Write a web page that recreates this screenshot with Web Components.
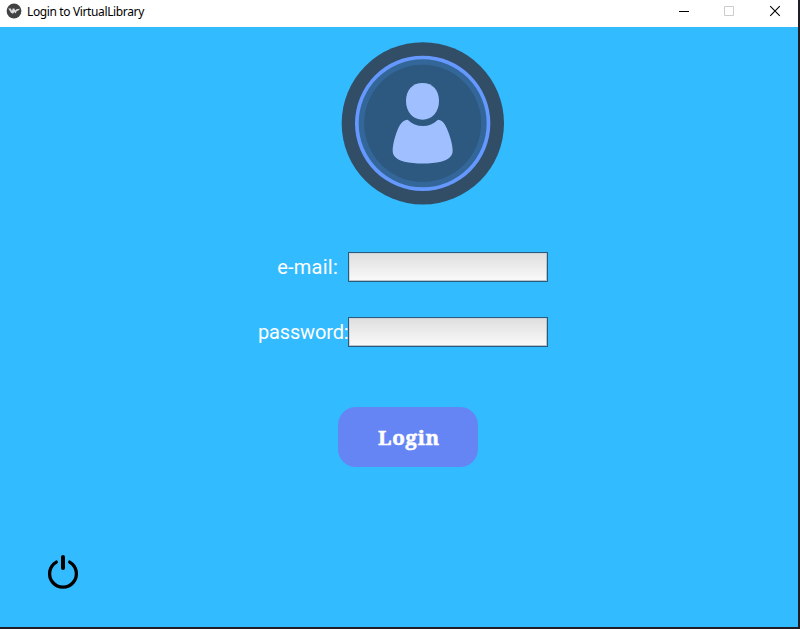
<!DOCTYPE html>
<html lang="en">
<head>
<meta charset="utf-8">
<title>Login to VirtualLibrary</title>
<style>
html,body{margin:0;height:100%;overflow:hidden}
</style>
</head>
<body>
<login-window></login-window>
<script>
const define = (name, html) => {
  const t = document.createElement('template');
  t.innerHTML = html;
  customElements.define(name, class extends HTMLElement {
    constructor() {
      super();
      this.attachShadow({mode: 'open'}).append(t.content.cloneNode(true));
    }
  });
};

define('title-bar', `
<style>
:host{display:flex;align-items:center;height:27px;background:#fff;color:#000;font:12px "Noto Sans","Open Sans",sans-serif;box-sizing:border-box;padding-left:6px}
.logo{width:16px;height:16px;margin-top:-5px;flex:none}
.title{margin:-4px auto 0 5px;line-height:16px;white-space:nowrap;letter-spacing:-.37px}
.btn{width:45px;height:23px;margin-bottom:4px;flex:none}
.btn:last-child{width:46px}
svg{display:block}
</style>
<svg class="logo" viewBox="0 0 16 16"><circle cx="8" cy="8" r="7.4" fill="#414244"/><path d="M2.300 5.500 4.800 5.600 6 8 6.600 5.500 8.400 5.600 9.200 7.400 10.400 6.200 14 5.800 12.400 7.400 10.800 8 9.600 10.400 8.200 9 7 10.800 5 9.800 3.600 7.600Z" fill="#dcdcdc"/></svg>
<span class="title"><slot></slot></span>
<svg class="btn" viewBox="0 0 45 23"><path d="M17 11.5h10" stroke="#000"/></svg>
<svg class="btn" viewBox="0 0 45 23"><path d="M17.5 6.5h9v9h-9z" fill="none" stroke="#ccc"/></svg>
<svg class="btn" viewBox="0 0 46 23"><path d="m18.2 6.2 9.6 9.6m0-9.6-9.6 9.6" stroke="#000" stroke-width="1.1"/></svg>
`);

define('user-avatar', `
<style>:host{display:block;width:176px;height:176px}svg{display:block}</style>
<svg width="176" height="176" viewBox="0 0 528 528">
<circle cx="263.5" cy="265" r="243.5" fill="#324d66"/>
<circle cx="263" cy="265" r="203" fill="#6699ff"/>
<circle cx="263" cy="265" r="192" fill="#336699"/>
<circle cx="263" cy="265" r="175.5" fill="#2d5980"/>
<path d="M262.500 144C294 144 312 167 312 198C312 231 291 254 262.500 254C234 254 213 231 213 198C213 167 231 144 262.500 144Z" fill="#a0bfff"/>
<path d="M218 254C231 266 246 273 264 273C281 273 296 266 309 254C321 255 329 265 335 279C344 299 353 328 353 347C353 366 336 375 318 380C287 387 240 387 208 380C190 375 173 366 173 347C173 328 181 299 190 279C197 265 205 255 218 254Z" fill="#a0bfff"/>
</svg>
`);

define('form-field', `
<style>
:host{display:flex;align-items:center;justify-content:flex-end;width:300px;height:30px}
label{white-space:nowrap;color:#fff;font:20px/30px Roboto,sans-serif;margin-right:10px;letter-spacing:.25px}
:host([narrow]) label{margin-right:-.5px;letter-spacing:-.15px}
input{flex:none;box-sizing:border-box;width:200px;height:30px;margin:0;padding:2px 6px;outline:0;border:1px solid #285b7c;border-radius:0;background:linear-gradient(#dedede,#fafafa);box-shadow:inset -1px -1px #b9c3c8,inset 1px 0 #d0d4d7,inset 0 1px #d0d4d7;font:15px Roboto,sans-serif}
</style>
<label for="value"><slot></slot></label><input id="value">
`);

define('login-button', `
<style>
:host{display:block;width:140px;height:60px}
button{width:100%;height:100%;border:0;border-radius:18px;background:#6685f5;color:#fff;padding:0 0 0 2px;font:bold 20.500px/60px "Noto Serif","DejaVu Serif",serif;-webkit-text-stroke:.5px #fff;letter-spacing:.7px}
</style>
<button><slot></slot></button>
`);

define('power-button', `
<style>:host{display:block;width:46px;height:46px}svg{display:block}</style>
<svg width="46" height="46" viewBox="0 0 46 46" fill="none" stroke="#000" stroke-linecap="round"><path d="M16.300 14.100A13.400 13.400 0 1 0 29.700 14.100" stroke-width="3.300"/><path d="M23 9v11" stroke-width="4"/></svg>
`);

define('login-window', `
<style>
:host{display:flex;flex-direction:column;width:800px;height:629px;box-sizing:border-box;background:#33bbff;border:solid #211d27;border-width:0 2px 2px 0}
main{flex:1;display:flex;flex-direction:column;align-items:flex-start}
user-avatar{margin:8px 0 0 335px}
form-field{margin:41px 0 0 248px}
form-field+form-field{margin-top:35px}
login-button{margin:60px 0 0 338px}
power-button{margin:81px 0 0 40px}
</style>
<title-bar>Login to VirtualLibrary</title-bar>
<main>
<user-avatar></user-avatar>
<form-field>e-mail:</form-field>
<form-field narrow>password:</form-field>
<login-button>Login</login-button>
<power-button></power-button>
</main>
`);
</script>
</body>
</html>
